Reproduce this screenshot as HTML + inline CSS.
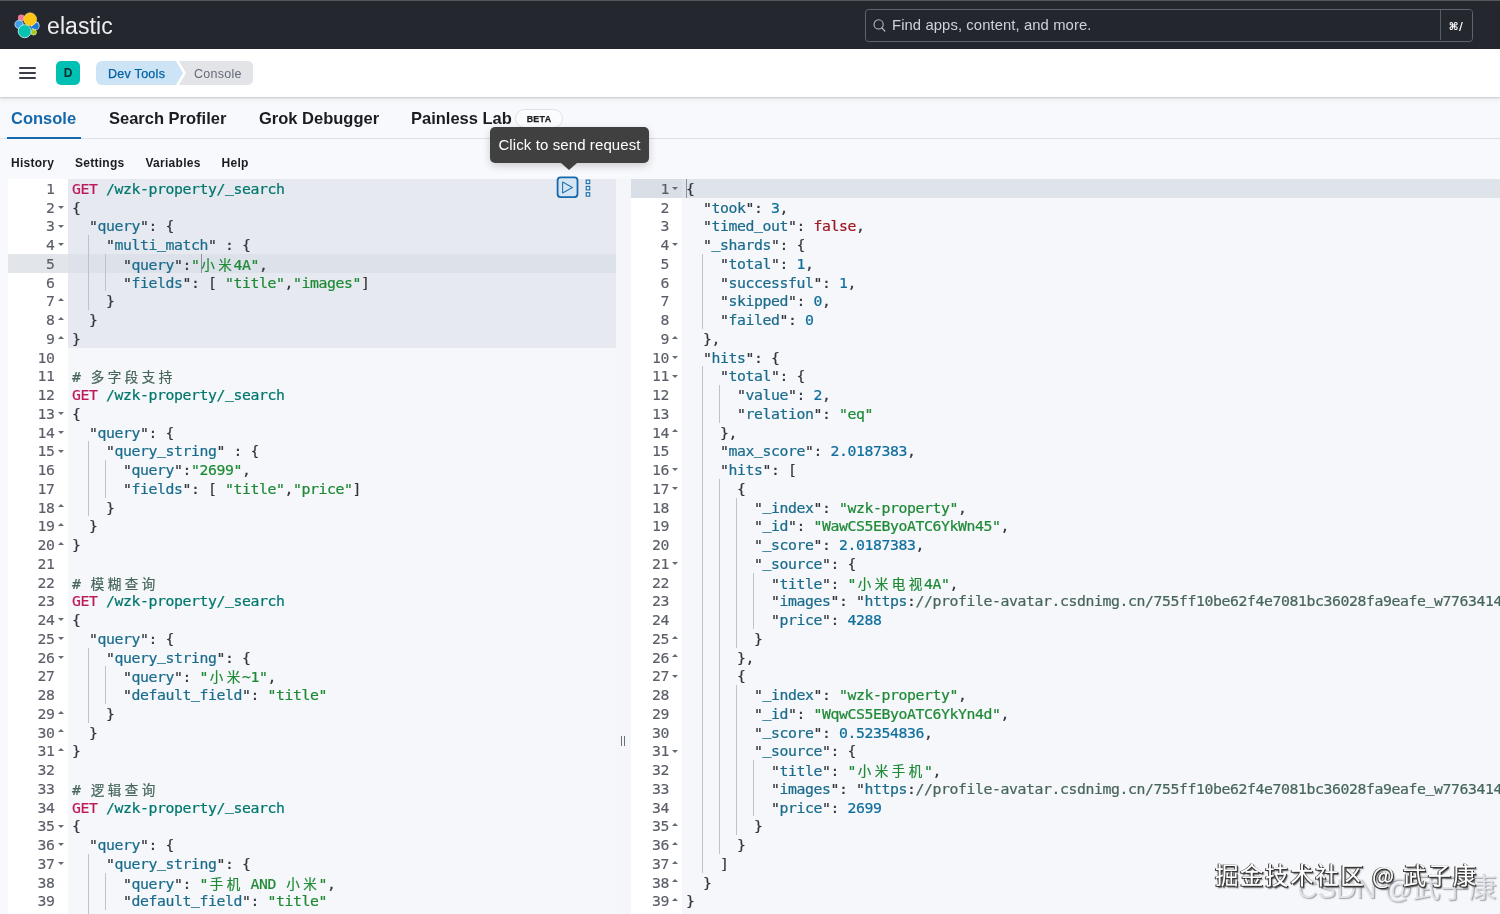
<!DOCTYPE html>
<html lang="en"><head><meta charset="utf-8"><title>Console - Dev Tools - Elastic</title>
<style>
*{box-sizing:border-box}
html,body{margin:0;padding:0}
body{width:1500px;height:914px;overflow:hidden;position:relative;background:#F8F9FC;font-family:"Liberation Sans","Noto Sans CJK SC",sans-serif;color:#1a1c21}
.abs{position:absolute}
#root{position:absolute;left:0;top:0;width:1500px;height:914px;overflow:hidden;will-change:transform}
#top{position:absolute;left:0;top:0;width:1500px;height:49px;background:#25272E}
#topline{position:absolute;left:0;top:0;width:1500px;height:1.3px;background:#56575d}
#etxt{position:absolute;left:47px;top:12px;font-size:23px;line-height:28px;color:#eceef1;letter-spacing:0.1px;font-weight:400}
#search{position:absolute;left:865px;top:9px;width:607.5px;height:32.5px;border:1.5px solid #60646f;border-radius:3.5px;background:#24262E}
#search .ph{position:absolute;left:26px;top:0;line-height:30px;font-size:14.8px;letter-spacing:.1px;color:#ced2da}
#search .kb{position:absolute;right:0;top:0;width:32px;height:30px;border-left:1px solid #585c67;background:#25272E;color:#fff;font-size:10.5px;font-weight:700;line-height:33px;text-align:center;border-radius:0 3px 3px 0;font-family:"DejaVu Sans","Liberation Sans",sans-serif;letter-spacing:.5px}
#crumbs{position:absolute;left:0;top:49px;width:1500px;height:48px;background:#fff;box-shadow:0 1px 1.5px rgba(0,0,0,.17),0 3px 5px rgba(0,0,0,.06)}
.hb{position:absolute;left:19px;height:2px;width:17px;background:#3a3d46;border-radius:1px}
#ava{position:absolute;left:56px;top:61px;width:24px;height:24px;border-radius:5px;background:#00BFB3;color:#0b2b2a;font-size:12px;font-weight:700;line-height:24.5px;text-align:center}
.bc{position:absolute;top:62.5px;height:23px;line-height:23px;font-size:12.5px;font-weight:400;letter-spacing:.28px;white-space:nowrap}
#tabs .t{position:absolute;top:107px;font-size:16.5px;line-height:22px;font-weight:700;color:#1a1c21;letter-spacing:0;white-space:nowrap}
#tabline{position:absolute;left:0;top:138px;width:1500px;height:1px;background:#dcdfe6}
#tabsel{position:absolute;left:7px;top:137px;width:73.5px;height:2px;background:#1468AB}
#beta{position:absolute;left:515px;top:109px;width:48px;height:19px;border:1px solid #dde0e7;border-radius:10px;-webkit-text-stroke:.25px #1a1c21;font-size:8.9px;font-weight:700;line-height:18px;text-align:center;letter-spacing:.3px;color:#1a1c21;background:#fbfcfd}
.tb{position:absolute;top:154.8px;font-size:12px;line-height:16px;font-weight:700;color:#1a1c21;white-space:nowrap;letter-spacing:.27px}
/* editors */
#lg{position:absolute;left:8px;top:178.90px;width:60px;height:740px;background:#fff}
#lc{position:absolute;left:68px;top:178.90px;width:548px;height:740px;background:#F5F7FA}
#lsel{position:absolute;left:68px;top:178.90px;width:548px;height:168.75px;background:#E6E9EF}
#lact{position:absolute;left:8px;top:253.90px;width:608px;height:18.75px;background:#DCE1EA}
#lactg{position:absolute;left:8px;top:253.90px;width:60px;height:18.75px;background:#E2E5EA}
#split{position:absolute;left:616px;top:178.90px;width:15px;height:740px;background:#F4F6FA}
#rg{position:absolute;left:631px;top:178.90px;width:51px;height:740px;background:#fff}
#rc{position:absolute;left:682px;top:178.90px;width:818px;height:740px;background:#F5F7FA}
#ract{position:absolute;left:682px;top:178.90px;width:818px;height:18.75px;background:#DFE3EA}
#ractg{position:absolute;left:631px;top:178.90px;width:51px;height:18.75px;background:#DADEE6}
.gn{-webkit-text-stroke:.15px currentColor;letter-spacing:-0.410px;position:absolute;height:18.75px;line-height:18.75px;font-family:"DejaVu Sans Mono","Liberation Mono","Noto Sans CJK SC",monospace;font-size:14.80px;color:#5b5e68;text-align:right;white-space:pre}
.cl{-webkit-text-stroke:.22px currentColor;letter-spacing:-0.410px;position:absolute;height:18.75px;line-height:18.75px;font-family:"DejaVu Sans Mono","Liberation Mono","Noto Sans CJK SC",monospace;font-size:14.80px;white-space:pre;color:#333}
.cl i.z{letter-spacing:0;display:inline-block;width:17.00px;text-align:center;font-style:normal;font-family:"Noto Sans CJK SC",sans-serif;font-size:13.5px}
.cl i.us{font-style:normal;position:relative;top:-2.2px}
.ig{position:absolute;width:1.2px;height:18.75px;background:#bfc2c9}
.fd{position:absolute;width:0;height:0;border-left:3px solid transparent;border-right:3px solid transparent;border-top:3.4px solid #666a73}
.fu{position:absolute;width:0;height:0;border-left:3px solid transparent;border-right:3px solid transparent;border-bottom:3.4px solid #666a73}
.m{color:#BD1A5C}.u{color:#00776E}.v{color:#1B6C8C}.s{color:#1F8A36}.n{color:#0F6E9C}.b{color:#A01822}.p{color:#33363d}.c{color:#47665B}
/* tooltip */
#tip{position:absolute;left:490px;top:127px;width:159px;height:36px;background:#404040;border-radius:5px;color:#fff;font-size:15px;letter-spacing:.1px;line-height:36px;text-align:center;white-space:nowrap;box-shadow:0 3px 8px rgba(0,0,0,.18)}
#tiparrow{position:absolute;left:560.8px;top:162.5px;width:0;height:0;border-left:8.5px solid transparent;border-right:8.5px solid transparent;border-top:7.5px solid #404040}
#play{position:absolute;left:556.5px;top:176.5px;width:22px;height:22px;border:2px solid #0D6BA8;border-radius:4px;background:#CFE3F3}
.dot{position:absolute;left:585.5px;width:4.5px;height:4.5px;border:1.2px solid #0D6BA8;background:transparent}
#wm1{position:absolute;left:1215px;top:857px;font-size:23.5px;line-height:34px;color:#fff;white-space:nowrap;font-family:"Noto Sans CJK SC",sans-serif;font-weight:400;letter-spacing:1.55px;text-shadow:-1px 0 0 #555,0 -0.5px 0 #888,1px 1px 0 #333,-1px 1px 0 #444,1.5px 1.5px 1.5px #444}
#wm2{position:absolute;left:1297px;top:872px;font-size:28px;line-height:34px;color:rgba(226,228,232,.9);white-space:nowrap;font-family:"Liberation Sans","Noto Sans CJK SC",sans-serif;text-shadow:1.2px 1.2px 1.2px rgba(120,125,135,.7),-1px -1px 0 rgba(255,255,255,.9)}
</style></head>
<body><div id="root">
<div id="top"></div><div id="topline"></div>
<svg class="abs" style="left:0;top:0" width="48" height="48" viewBox="0 0 48 48">
<circle cx="21.3" cy="17.9" r="3.4" fill="#EE7B9A"/>
<circle cx="19.1" cy="24.4" r="4.2" fill="#3EA0E6" stroke="#cfe8fa" stroke-width=".8"/>
<circle cx="35.1" cy="25.7" r="4.5" fill="#cfe6fa"/>
<path d="M30.4 27.4 L36.4 22.2 A4.2 4.2 0 0 1 36.5 29.8 Z" fill="#1B78D6"/>
<circle cx="33.6" cy="32.2" r="2.9" fill="#A4CB1E" stroke="#e4f2a8" stroke-width=".6"/>
<circle cx="30.1" cy="19.3" r="6.5" fill="#FEC514" stroke="#fde9a0" stroke-width=".5"/>
<circle cx="24.7" cy="31.2" r="6.5" fill="#05C3B0" stroke="#b9f3ec" stroke-width=".9"/>
</svg>
<div id="etxt">elastic</div>
<div id="search">
<svg class="abs" style="left:6px;top:8px" width="16" height="16" viewBox="0 0 16 16"><circle cx="6.6" cy="6.4" r="4.6" fill="none" stroke="#b4b8c3" stroke-width="1.1"/><path d="M9.9 9.8 L12.8 13" stroke="#b4b8c3" stroke-width="1.2" stroke-linecap="round"/></svg>
<div class="ph">Find apps, content, and more.</div><div class="kb">&#8984;/</div></div>
<div id="crumbs"></div>
<div class="hb" style="top:67px"></div><div class="hb" style="top:72px"></div><div class="hb" style="top:77px"></div>
<div id="ava">D</div>
<svg class="abs" style="left:96px;top:61.3px" width="160" height="24" viewBox="0 0 160 24">
<path d="M6 0 H80 L87 12 L80 24 H6 A6 6 0 0 1 0 18 V6 A6 6 0 0 1 6 0Z" fill="#CCE4F5"/>
<path d="M83 0 H152 A5 5 0 0 1 157 5 V19 A5 5 0 0 1 152 24 H83 L90 12Z" fill="#E3E4E8"/>
</svg>
<div class="bc" style="left:108px;color:#0061A6;font-weight:400;-webkit-text-stroke:.25px #0061A6">Dev Tools</div>
<div class="bc" style="left:194px;color:#646a77">Console</div>
<div id="tabs">
<div class="t" style="left:11px;color:#1468AB">Console</div>
<div class="t" style="left:109px">Search Profiler</div>
<div class="t" style="left:259px">Grok Debugger</div>
<div class="t" style="left:411px">Painless Lab</div>
</div>
<div id="beta">BETA</div>
<div id="tabline"></div><div id="tabsel"></div>
<div class="tb" style="left:11px">History</div>
<div class="tb" style="left:75px">Settings</div>
<div class="tb" style="left:145.5px">Variables</div>
<div class="tb" style="left:221.5px">Help</div>
<div id="lg"></div><div id="lc"></div><div id="lsel"></div><div id="lact"></div><div id="lactg"></div>
<div id="split"></div>
<div id="rg"></div><div id="rc"></div><div id="ract"></div><div id="ractg"></div>
<div class="abs" style="left:201px;top:253.90px;width:1.3px;height:18.75px;background:#8a8f99"></div>
<div class="abs" style="left:686px;top:178.90px;width:1.3px;height:18.75px;background:#8a8f99"></div>
<div class="gn" style="top:179.80px;left:8px;width:46.5px">1</div>
<div class="cl" style="top:179.80px;left:72px"><span class="m">GET</span> <span class="u">/wzk-property/<i class="us">_</i>search</span></div>
<div class="gn" style="top:198.55px;left:8px;width:46.5px">2</div>
<div class="fd" style="top:205.85px;left:58.0px"></div>
<div class="cl" style="top:198.55px;left:72px"><span class="p">{</span></div>
<div class="gn" style="top:217.30px;left:8px;width:46.5px">3</div>
<div class="fd" style="top:224.60px;left:58.0px"></div>
<div class="cl" style="top:217.30px;left:72px">  <span class="p">"</span><span class="v">query</span><span class="p">"</span><span class="p">:</span> <span class="p">{</span></div>
<div class="gn" style="top:236.05px;left:8px;width:46.5px">4</div>
<div class="fd" style="top:243.35px;left:58.0px"></div>
<div class="ig" style="top:235.15px;left:88.0px"></div>
<div class="cl" style="top:236.05px;left:72px">    <span class="p">"</span><span class="v">multi<i class="us">_</i>match</span><span class="p">"</span> <span class="p">:</span> <span class="p">{</span></div>
<div class="gn" style="top:254.80px;left:8px;width:46.5px">5</div>
<div class="ig" style="top:253.90px;left:88.0px"></div>
<div class="ig" style="top:253.90px;left:105.0px"></div>
<div class="cl" style="top:254.80px;left:72px">      <span class="p">"</span><span class="v">query</span><span class="p">"</span><span class="p">:</span><span class="s">"<i class="z">小</i><i class="z">米</i>4A"</span><span class="p">,</span></div>
<div class="gn" style="top:273.55px;left:8px;width:46.5px">6</div>
<div class="ig" style="top:272.65px;left:88.0px"></div>
<div class="ig" style="top:272.65px;left:105.0px"></div>
<div class="cl" style="top:273.55px;left:72px">      <span class="p">"</span><span class="v">fields</span><span class="p">"</span><span class="p">:</span> <span class="p">[</span> <span class="s">"title"</span><span class="p">,</span><span class="s">"images"</span><span class="p">]</span></div>
<div class="gn" style="top:292.30px;left:8px;width:46.5px">7</div>
<div class="fu" style="top:298.00px;left:58.0px"></div>
<div class="ig" style="top:291.40px;left:88.0px"></div>
<div class="cl" style="top:292.30px;left:72px">    <span class="p">}</span></div>
<div class="gn" style="top:311.05px;left:8px;width:46.5px">8</div>
<div class="fu" style="top:316.75px;left:58.0px"></div>
<div class="cl" style="top:311.05px;left:72px">  <span class="p">}</span></div>
<div class="gn" style="top:329.80px;left:8px;width:46.5px">9</div>
<div class="fu" style="top:335.50px;left:58.0px"></div>
<div class="cl" style="top:329.80px;left:72px"><span class="p">}</span></div>
<div class="gn" style="top:348.55px;left:8px;width:46.5px">10</div>
<div class="cl" style="top:348.55px;left:72px"></div>
<div class="gn" style="top:367.30px;left:8px;width:46.5px">11</div>
<div class="cl" style="top:367.30px;left:72px"><span class="c"># <i class="z">多</i><i class="z">字</i><i class="z">段</i><i class="z">支</i><i class="z">持</i></span></div>
<div class="gn" style="top:386.05px;left:8px;width:46.5px">12</div>
<div class="cl" style="top:386.05px;left:72px"><span class="m">GET</span> <span class="u">/wzk-property/<i class="us">_</i>search</span></div>
<div class="gn" style="top:404.80px;left:8px;width:46.5px">13</div>
<div class="fd" style="top:412.10px;left:58.0px"></div>
<div class="cl" style="top:404.80px;left:72px"><span class="p">{</span></div>
<div class="gn" style="top:423.55px;left:8px;width:46.5px">14</div>
<div class="fd" style="top:430.85px;left:58.0px"></div>
<div class="cl" style="top:423.55px;left:72px">  <span class="p">"</span><span class="v">query</span><span class="p">"</span><span class="p">:</span> <span class="p">{</span></div>
<div class="gn" style="top:442.30px;left:8px;width:46.5px">15</div>
<div class="fd" style="top:449.60px;left:58.0px"></div>
<div class="ig" style="top:441.40px;left:88.0px"></div>
<div class="cl" style="top:442.30px;left:72px">    <span class="p">"</span><span class="v">query<i class="us">_</i>string</span><span class="p">"</span> <span class="p">:</span> <span class="p">{</span></div>
<div class="gn" style="top:461.05px;left:8px;width:46.5px">16</div>
<div class="ig" style="top:460.15px;left:88.0px"></div>
<div class="ig" style="top:460.15px;left:105.0px"></div>
<div class="cl" style="top:461.05px;left:72px">      <span class="p">"</span><span class="v">query</span><span class="p">"</span><span class="p">:</span><span class="s">"2699"</span><span class="p">,</span></div>
<div class="gn" style="top:479.80px;left:8px;width:46.5px">17</div>
<div class="ig" style="top:478.90px;left:88.0px"></div>
<div class="ig" style="top:478.90px;left:105.0px"></div>
<div class="cl" style="top:479.80px;left:72px">      <span class="p">"</span><span class="v">fields</span><span class="p">"</span><span class="p">:</span> <span class="p">[</span> <span class="s">"title"</span><span class="p">,</span><span class="s">"price"</span><span class="p">]</span></div>
<div class="gn" style="top:498.55px;left:8px;width:46.5px">18</div>
<div class="fu" style="top:504.25px;left:58.0px"></div>
<div class="ig" style="top:497.65px;left:88.0px"></div>
<div class="cl" style="top:498.55px;left:72px">    <span class="p">}</span></div>
<div class="gn" style="top:517.30px;left:8px;width:46.5px">19</div>
<div class="fu" style="top:523.00px;left:58.0px"></div>
<div class="cl" style="top:517.30px;left:72px">  <span class="p">}</span></div>
<div class="gn" style="top:536.05px;left:8px;width:46.5px">20</div>
<div class="fu" style="top:541.75px;left:58.0px"></div>
<div class="cl" style="top:536.05px;left:72px"><span class="p">}</span></div>
<div class="gn" style="top:554.80px;left:8px;width:46.5px">21</div>
<div class="cl" style="top:554.80px;left:72px"></div>
<div class="gn" style="top:573.55px;left:8px;width:46.5px">22</div>
<div class="cl" style="top:573.55px;left:72px"><span class="c"># <i class="z">模</i><i class="z">糊</i><i class="z">查</i><i class="z">询</i></span></div>
<div class="gn" style="top:592.30px;left:8px;width:46.5px">23</div>
<div class="cl" style="top:592.30px;left:72px"><span class="m">GET</span> <span class="u">/wzk-property/<i class="us">_</i>search</span></div>
<div class="gn" style="top:611.05px;left:8px;width:46.5px">24</div>
<div class="fd" style="top:618.35px;left:58.0px"></div>
<div class="cl" style="top:611.05px;left:72px"><span class="p">{</span></div>
<div class="gn" style="top:629.80px;left:8px;width:46.5px">25</div>
<div class="fd" style="top:637.10px;left:58.0px"></div>
<div class="cl" style="top:629.80px;left:72px">  <span class="p">"</span><span class="v">query</span><span class="p">"</span><span class="p">:</span> <span class="p">{</span></div>
<div class="gn" style="top:648.55px;left:8px;width:46.5px">26</div>
<div class="fd" style="top:655.85px;left:58.0px"></div>
<div class="ig" style="top:647.65px;left:88.0px"></div>
<div class="cl" style="top:648.55px;left:72px">    <span class="p">"</span><span class="v">query<i class="us">_</i>string</span><span class="p">"</span><span class="p">:</span> <span class="p">{</span></div>
<div class="gn" style="top:667.30px;left:8px;width:46.5px">27</div>
<div class="ig" style="top:666.40px;left:88.0px"></div>
<div class="ig" style="top:666.40px;left:105.0px"></div>
<div class="cl" style="top:667.30px;left:72px">      <span class="p">"</span><span class="v">query</span><span class="p">"</span><span class="p">:</span> <span class="s">"<i class="z">小</i><i class="z">米</i>~1"</span><span class="p">,</span></div>
<div class="gn" style="top:686.05px;left:8px;width:46.5px">28</div>
<div class="ig" style="top:685.15px;left:88.0px"></div>
<div class="ig" style="top:685.15px;left:105.0px"></div>
<div class="cl" style="top:686.05px;left:72px">      <span class="p">"</span><span class="v">default<i class="us">_</i>field</span><span class="p">"</span><span class="p">:</span> <span class="s">"title"</span></div>
<div class="gn" style="top:704.80px;left:8px;width:46.5px">29</div>
<div class="fu" style="top:710.50px;left:58.0px"></div>
<div class="ig" style="top:703.90px;left:88.0px"></div>
<div class="cl" style="top:704.80px;left:72px">    <span class="p">}</span></div>
<div class="gn" style="top:723.55px;left:8px;width:46.5px">30</div>
<div class="fu" style="top:729.25px;left:58.0px"></div>
<div class="cl" style="top:723.55px;left:72px">  <span class="p">}</span></div>
<div class="gn" style="top:742.30px;left:8px;width:46.5px">31</div>
<div class="fu" style="top:748.00px;left:58.0px"></div>
<div class="cl" style="top:742.30px;left:72px"><span class="p">}</span></div>
<div class="gn" style="top:761.05px;left:8px;width:46.5px">32</div>
<div class="cl" style="top:761.05px;left:72px"></div>
<div class="gn" style="top:779.80px;left:8px;width:46.5px">33</div>
<div class="cl" style="top:779.80px;left:72px"><span class="c"># <i class="z">逻</i><i class="z">辑</i><i class="z">查</i><i class="z">询</i></span></div>
<div class="gn" style="top:798.55px;left:8px;width:46.5px">34</div>
<div class="cl" style="top:798.55px;left:72px"><span class="m">GET</span> <span class="u">/wzk-property/<i class="us">_</i>search</span></div>
<div class="gn" style="top:817.30px;left:8px;width:46.5px">35</div>
<div class="fd" style="top:824.60px;left:58.0px"></div>
<div class="cl" style="top:817.30px;left:72px"><span class="p">{</span></div>
<div class="gn" style="top:836.05px;left:8px;width:46.5px">36</div>
<div class="fd" style="top:843.35px;left:58.0px"></div>
<div class="cl" style="top:836.05px;left:72px">  <span class="p">"</span><span class="v">query</span><span class="p">"</span><span class="p">:</span> <span class="p">{</span></div>
<div class="gn" style="top:854.80px;left:8px;width:46.5px">37</div>
<div class="fd" style="top:862.10px;left:58.0px"></div>
<div class="ig" style="top:853.90px;left:88.0px"></div>
<div class="cl" style="top:854.80px;left:72px">    <span class="p">"</span><span class="v">query<i class="us">_</i>string</span><span class="p">"</span><span class="p">:</span> <span class="p">{</span></div>
<div class="gn" style="top:873.55px;left:8px;width:46.5px">38</div>
<div class="ig" style="top:872.65px;left:88.0px"></div>
<div class="ig" style="top:872.65px;left:105.0px"></div>
<div class="cl" style="top:873.55px;left:72px">      <span class="p">"</span><span class="v">query</span><span class="p">"</span><span class="p">:</span> <span class="s">"<i class="z">手</i><i class="z">机</i> AND <i class="z">小</i><i class="z">米</i>"</span><span class="p">,</span></div>
<div class="gn" style="top:892.30px;left:8px;width:46.5px">39</div>
<div class="ig" style="top:891.40px;left:88.0px"></div>
<div class="ig" style="top:891.40px;left:105.0px"></div>
<div class="cl" style="top:892.30px;left:72px">      <span class="p">"</span><span class="v">default<i class="us">_</i>field</span><span class="p">"</span><span class="p">:</span> <span class="s">"title"</span></div>
<div class="gn" style="top:911.05px;left:8px;width:46.5px">40</div>
<div class="fu" style="top:916.75px;left:58.0px"></div>
<div class="ig" style="top:910.15px;left:88.0px"></div>
<div class="cl" style="top:911.05px;left:72px">    <span class="p">}</span></div>
<div class="gn" style="top:179.80px;left:631px;width:38.0px">1</div>
<div class="fd" style="top:187.10px;left:672.4px"></div>
<div class="cl" style="top:179.80px;left:686px"><span class="p">{</span></div>
<div class="gn" style="top:198.55px;left:631px;width:38.0px">2</div>
<div class="cl" style="top:198.55px;left:686px">  <span class="p">"</span><span class="v">took</span><span class="p">"</span><span class="p">:</span> <span class="n">3</span><span class="p">,</span></div>
<div class="gn" style="top:217.30px;left:631px;width:38.0px">3</div>
<div class="cl" style="top:217.30px;left:686px">  <span class="p">"</span><span class="v">timed<i class="us">_</i>out</span><span class="p">"</span><span class="p">:</span> <span class="b">false</span><span class="p">,</span></div>
<div class="gn" style="top:236.05px;left:631px;width:38.0px">4</div>
<div class="fd" style="top:243.35px;left:672.4px"></div>
<div class="cl" style="top:236.05px;left:686px">  <span class="p">"</span><span class="v"><i class="us">_</i>shards</span><span class="p">"</span><span class="p">:</span> <span class="p">{</span></div>
<div class="gn" style="top:254.80px;left:631px;width:38.0px">5</div>
<div class="ig" style="top:253.90px;left:702.0px"></div>
<div class="cl" style="top:254.80px;left:686px">    <span class="p">"</span><span class="v">total</span><span class="p">"</span><span class="p">:</span> <span class="n">1</span><span class="p">,</span></div>
<div class="gn" style="top:273.55px;left:631px;width:38.0px">6</div>
<div class="ig" style="top:272.65px;left:702.0px"></div>
<div class="cl" style="top:273.55px;left:686px">    <span class="p">"</span><span class="v">successful</span><span class="p">"</span><span class="p">:</span> <span class="n">1</span><span class="p">,</span></div>
<div class="gn" style="top:292.30px;left:631px;width:38.0px">7</div>
<div class="ig" style="top:291.40px;left:702.0px"></div>
<div class="cl" style="top:292.30px;left:686px">    <span class="p">"</span><span class="v">skipped</span><span class="p">"</span><span class="p">:</span> <span class="n">0</span><span class="p">,</span></div>
<div class="gn" style="top:311.05px;left:631px;width:38.0px">8</div>
<div class="ig" style="top:310.15px;left:702.0px"></div>
<div class="cl" style="top:311.05px;left:686px">    <span class="p">"</span><span class="v">failed</span><span class="p">"</span><span class="p">:</span> <span class="n">0</span></div>
<div class="gn" style="top:329.80px;left:631px;width:38.0px">9</div>
<div class="fu" style="top:335.50px;left:672.4px"></div>
<div class="cl" style="top:329.80px;left:686px">  <span class="p">}</span><span class="p">,</span></div>
<div class="gn" style="top:348.55px;left:631px;width:38.0px">10</div>
<div class="fd" style="top:355.85px;left:672.4px"></div>
<div class="cl" style="top:348.55px;left:686px">  <span class="p">"</span><span class="v">hits</span><span class="p">"</span><span class="p">:</span> <span class="p">{</span></div>
<div class="gn" style="top:367.30px;left:631px;width:38.0px">11</div>
<div class="fd" style="top:374.60px;left:672.4px"></div>
<div class="ig" style="top:366.40px;left:702.0px"></div>
<div class="cl" style="top:367.30px;left:686px">    <span class="p">"</span><span class="v">total</span><span class="p">"</span><span class="p">:</span> <span class="p">{</span></div>
<div class="gn" style="top:386.05px;left:631px;width:38.0px">12</div>
<div class="ig" style="top:385.15px;left:702.0px"></div>
<div class="ig" style="top:385.15px;left:719.0px"></div>
<div class="cl" style="top:386.05px;left:686px">      <span class="p">"</span><span class="v">value</span><span class="p">"</span><span class="p">:</span> <span class="n">2</span><span class="p">,</span></div>
<div class="gn" style="top:404.80px;left:631px;width:38.0px">13</div>
<div class="ig" style="top:403.90px;left:702.0px"></div>
<div class="ig" style="top:403.90px;left:719.0px"></div>
<div class="cl" style="top:404.80px;left:686px">      <span class="p">"</span><span class="v">relation</span><span class="p">"</span><span class="p">:</span> <span class="s">"eq"</span></div>
<div class="gn" style="top:423.55px;left:631px;width:38.0px">14</div>
<div class="fu" style="top:429.25px;left:672.4px"></div>
<div class="ig" style="top:422.65px;left:702.0px"></div>
<div class="cl" style="top:423.55px;left:686px">    <span class="p">}</span><span class="p">,</span></div>
<div class="gn" style="top:442.30px;left:631px;width:38.0px">15</div>
<div class="ig" style="top:441.40px;left:702.0px"></div>
<div class="cl" style="top:442.30px;left:686px">    <span class="p">"</span><span class="v">max<i class="us">_</i>score</span><span class="p">"</span><span class="p">:</span> <span class="n">2.0187383</span><span class="p">,</span></div>
<div class="gn" style="top:461.05px;left:631px;width:38.0px">16</div>
<div class="fd" style="top:468.35px;left:672.4px"></div>
<div class="ig" style="top:460.15px;left:702.0px"></div>
<div class="cl" style="top:461.05px;left:686px">    <span class="p">"</span><span class="v">hits</span><span class="p">"</span><span class="p">:</span> <span class="p">[</span></div>
<div class="gn" style="top:479.80px;left:631px;width:38.0px">17</div>
<div class="fd" style="top:487.10px;left:672.4px"></div>
<div class="ig" style="top:478.90px;left:702.0px"></div>
<div class="ig" style="top:478.90px;left:719.0px"></div>
<div class="cl" style="top:479.80px;left:686px">      <span class="p">{</span></div>
<div class="gn" style="top:498.55px;left:631px;width:38.0px">18</div>
<div class="ig" style="top:497.65px;left:702.0px"></div>
<div class="ig" style="top:497.65px;left:719.0px"></div>
<div class="ig" style="top:497.65px;left:736.0px"></div>
<div class="cl" style="top:498.55px;left:686px">        <span class="p">"</span><span class="v"><i class="us">_</i>index</span><span class="p">"</span><span class="p">:</span> <span class="s">"wzk-property"</span><span class="p">,</span></div>
<div class="gn" style="top:517.30px;left:631px;width:38.0px">19</div>
<div class="ig" style="top:516.40px;left:702.0px"></div>
<div class="ig" style="top:516.40px;left:719.0px"></div>
<div class="ig" style="top:516.40px;left:736.0px"></div>
<div class="cl" style="top:517.30px;left:686px">        <span class="p">"</span><span class="v"><i class="us">_</i>id</span><span class="p">"</span><span class="p">:</span> <span class="s">"WawCS5EByoATC6YkWn45"</span><span class="p">,</span></div>
<div class="gn" style="top:536.05px;left:631px;width:38.0px">20</div>
<div class="ig" style="top:535.15px;left:702.0px"></div>
<div class="ig" style="top:535.15px;left:719.0px"></div>
<div class="ig" style="top:535.15px;left:736.0px"></div>
<div class="cl" style="top:536.05px;left:686px">        <span class="p">"</span><span class="v"><i class="us">_</i>score</span><span class="p">"</span><span class="p">:</span> <span class="n">2.0187383</span><span class="p">,</span></div>
<div class="gn" style="top:554.80px;left:631px;width:38.0px">21</div>
<div class="fd" style="top:562.10px;left:672.4px"></div>
<div class="ig" style="top:553.90px;left:702.0px"></div>
<div class="ig" style="top:553.90px;left:719.0px"></div>
<div class="ig" style="top:553.90px;left:736.0px"></div>
<div class="cl" style="top:554.80px;left:686px">        <span class="p">"</span><span class="v"><i class="us">_</i>source</span><span class="p">"</span><span class="p">:</span> <span class="p">{</span></div>
<div class="gn" style="top:573.55px;left:631px;width:38.0px">22</div>
<div class="ig" style="top:572.65px;left:702.0px"></div>
<div class="ig" style="top:572.65px;left:719.0px"></div>
<div class="ig" style="top:572.65px;left:736.0px"></div>
<div class="ig" style="top:572.65px;left:753.0px"></div>
<div class="cl" style="top:573.55px;left:686px">          <span class="p">"</span><span class="v">title</span><span class="p">"</span><span class="p">:</span> <span class="s">"<i class="z">小</i><i class="z">米</i><i class="z">电</i><i class="z">视</i>4A"</span><span class="p">,</span></div>
<div class="gn" style="top:592.30px;left:631px;width:38.0px">23</div>
<div class="ig" style="top:591.40px;left:702.0px"></div>
<div class="ig" style="top:591.40px;left:719.0px"></div>
<div class="ig" style="top:591.40px;left:736.0px"></div>
<div class="ig" style="top:591.40px;left:753.0px"></div>
<div class="cl" style="top:592.30px;left:686px">          <span class="p">"</span><span class="v">images</span><span class="p">"</span><span class="p">:</span> <span class="p">"</span><span class="v">https</span><span class="p">:</span><span class="c">//profile-avatar.csdnimg.cn/755ff10be62f4e7081bc36028fa9eafe<i class="us">_</i>w77634140.jpg",</span></div>
<div class="gn" style="top:611.05px;left:631px;width:38.0px">24</div>
<div class="ig" style="top:610.15px;left:702.0px"></div>
<div class="ig" style="top:610.15px;left:719.0px"></div>
<div class="ig" style="top:610.15px;left:736.0px"></div>
<div class="ig" style="top:610.15px;left:753.0px"></div>
<div class="cl" style="top:611.05px;left:686px">          <span class="p">"</span><span class="v">price</span><span class="p">"</span><span class="p">:</span> <span class="n">4288</span></div>
<div class="gn" style="top:629.80px;left:631px;width:38.0px">25</div>
<div class="fu" style="top:635.50px;left:672.4px"></div>
<div class="ig" style="top:628.90px;left:702.0px"></div>
<div class="ig" style="top:628.90px;left:719.0px"></div>
<div class="ig" style="top:628.90px;left:736.0px"></div>
<div class="cl" style="top:629.80px;left:686px">        <span class="p">}</span></div>
<div class="gn" style="top:648.55px;left:631px;width:38.0px">26</div>
<div class="fu" style="top:654.25px;left:672.4px"></div>
<div class="ig" style="top:647.65px;left:702.0px"></div>
<div class="ig" style="top:647.65px;left:719.0px"></div>
<div class="cl" style="top:648.55px;left:686px">      <span class="p">}</span><span class="p">,</span></div>
<div class="gn" style="top:667.30px;left:631px;width:38.0px">27</div>
<div class="fd" style="top:674.60px;left:672.4px"></div>
<div class="ig" style="top:666.40px;left:702.0px"></div>
<div class="ig" style="top:666.40px;left:719.0px"></div>
<div class="cl" style="top:667.30px;left:686px">      <span class="p">{</span></div>
<div class="gn" style="top:686.05px;left:631px;width:38.0px">28</div>
<div class="ig" style="top:685.15px;left:702.0px"></div>
<div class="ig" style="top:685.15px;left:719.0px"></div>
<div class="ig" style="top:685.15px;left:736.0px"></div>
<div class="cl" style="top:686.05px;left:686px">        <span class="p">"</span><span class="v"><i class="us">_</i>index</span><span class="p">"</span><span class="p">:</span> <span class="s">"wzk-property"</span><span class="p">,</span></div>
<div class="gn" style="top:704.80px;left:631px;width:38.0px">29</div>
<div class="ig" style="top:703.90px;left:702.0px"></div>
<div class="ig" style="top:703.90px;left:719.0px"></div>
<div class="ig" style="top:703.90px;left:736.0px"></div>
<div class="cl" style="top:704.80px;left:686px">        <span class="p">"</span><span class="v"><i class="us">_</i>id</span><span class="p">"</span><span class="p">:</span> <span class="s">"WqwCS5EByoATC6YkYn4d"</span><span class="p">,</span></div>
<div class="gn" style="top:723.55px;left:631px;width:38.0px">30</div>
<div class="ig" style="top:722.65px;left:702.0px"></div>
<div class="ig" style="top:722.65px;left:719.0px"></div>
<div class="ig" style="top:722.65px;left:736.0px"></div>
<div class="cl" style="top:723.55px;left:686px">        <span class="p">"</span><span class="v"><i class="us">_</i>score</span><span class="p">"</span><span class="p">:</span> <span class="n">0.52354836</span><span class="p">,</span></div>
<div class="gn" style="top:742.30px;left:631px;width:38.0px">31</div>
<div class="fd" style="top:749.60px;left:672.4px"></div>
<div class="ig" style="top:741.40px;left:702.0px"></div>
<div class="ig" style="top:741.40px;left:719.0px"></div>
<div class="ig" style="top:741.40px;left:736.0px"></div>
<div class="cl" style="top:742.30px;left:686px">        <span class="p">"</span><span class="v"><i class="us">_</i>source</span><span class="p">"</span><span class="p">:</span> <span class="p">{</span></div>
<div class="gn" style="top:761.05px;left:631px;width:38.0px">32</div>
<div class="ig" style="top:760.15px;left:702.0px"></div>
<div class="ig" style="top:760.15px;left:719.0px"></div>
<div class="ig" style="top:760.15px;left:736.0px"></div>
<div class="ig" style="top:760.15px;left:753.0px"></div>
<div class="cl" style="top:761.05px;left:686px">          <span class="p">"</span><span class="v">title</span><span class="p">"</span><span class="p">:</span> <span class="s">"<i class="z">小</i><i class="z">米</i><i class="z">手</i><i class="z">机</i>"</span><span class="p">,</span></div>
<div class="gn" style="top:779.80px;left:631px;width:38.0px">33</div>
<div class="ig" style="top:778.90px;left:702.0px"></div>
<div class="ig" style="top:778.90px;left:719.0px"></div>
<div class="ig" style="top:778.90px;left:736.0px"></div>
<div class="ig" style="top:778.90px;left:753.0px"></div>
<div class="cl" style="top:779.80px;left:686px">          <span class="p">"</span><span class="v">images</span><span class="p">"</span><span class="p">:</span> <span class="p">"</span><span class="v">https</span><span class="p">:</span><span class="c">//profile-avatar.csdnimg.cn/755ff10be62f4e7081bc36028fa9eafe<i class="us">_</i>w77634140.jpg",</span></div>
<div class="gn" style="top:798.55px;left:631px;width:38.0px">34</div>
<div class="ig" style="top:797.65px;left:702.0px"></div>
<div class="ig" style="top:797.65px;left:719.0px"></div>
<div class="ig" style="top:797.65px;left:736.0px"></div>
<div class="ig" style="top:797.65px;left:753.0px"></div>
<div class="cl" style="top:798.55px;left:686px">          <span class="p">"</span><span class="v">price</span><span class="p">"</span><span class="p">:</span> <span class="n">2699</span></div>
<div class="gn" style="top:817.30px;left:631px;width:38.0px">35</div>
<div class="fu" style="top:823.00px;left:672.4px"></div>
<div class="ig" style="top:816.40px;left:702.0px"></div>
<div class="ig" style="top:816.40px;left:719.0px"></div>
<div class="ig" style="top:816.40px;left:736.0px"></div>
<div class="cl" style="top:817.30px;left:686px">        <span class="p">}</span></div>
<div class="gn" style="top:836.05px;left:631px;width:38.0px">36</div>
<div class="fu" style="top:841.75px;left:672.4px"></div>
<div class="ig" style="top:835.15px;left:702.0px"></div>
<div class="ig" style="top:835.15px;left:719.0px"></div>
<div class="cl" style="top:836.05px;left:686px">      <span class="p">}</span></div>
<div class="gn" style="top:854.80px;left:631px;width:38.0px">37</div>
<div class="fu" style="top:860.50px;left:672.4px"></div>
<div class="ig" style="top:853.90px;left:702.0px"></div>
<div class="cl" style="top:854.80px;left:686px">    <span class="p">]</span></div>
<div class="gn" style="top:873.55px;left:631px;width:38.0px">38</div>
<div class="fu" style="top:879.25px;left:672.4px"></div>
<div class="cl" style="top:873.55px;left:686px">  <span class="p">}</span></div>
<div class="gn" style="top:892.30px;left:631px;width:38.0px">39</div>
<div class="fu" style="top:898.00px;left:672.4px"></div>
<div class="cl" style="top:892.30px;left:686px"><span class="p">}</span></div>
<div class="abs" style="left:621px;top:736px;width:1px;height:10px;background:#69707d"></div>
<div class="abs" style="left:624px;top:736px;width:1px;height:10px;background:#69707d"></div>
<svg class="abs" style="left:550px;top:172px" width="50" height="30" viewBox="550 172 50 30">
<rect x="557.6" y="177.3" width="19.9" height="19.8" rx="3" fill="#D6E5F3" stroke="#1468AB" stroke-width="1.8"/>
<path d="M562.6 182 L572.4 187.4 L562.6 192.9Z" fill="none" stroke="#2474B1" stroke-width="1.1" stroke-linejoin="round"/>
<rect x="586.2" y="180.1" width="3.5" height="3.5" fill="#E3EEF8" stroke="#1A6FB0" stroke-width="1.1"/>
<rect x="586.2" y="186.4" width="3.5" height="3.5" fill="#E3EEF8" stroke="#1A6FB0" stroke-width="1.1"/>
<rect x="586.2" y="192.7" width="3.5" height="3.5" fill="#E3EEF8" stroke="#1A6FB0" stroke-width="1.1"/>
</svg>
<div id="tip">Click to send request</div><div id="tiparrow"></div>
<div id="wm2">CSDN @武子康</div>
<div id="wm1">掘金技术社区 @ 武子康</div>
</div></body></html>
